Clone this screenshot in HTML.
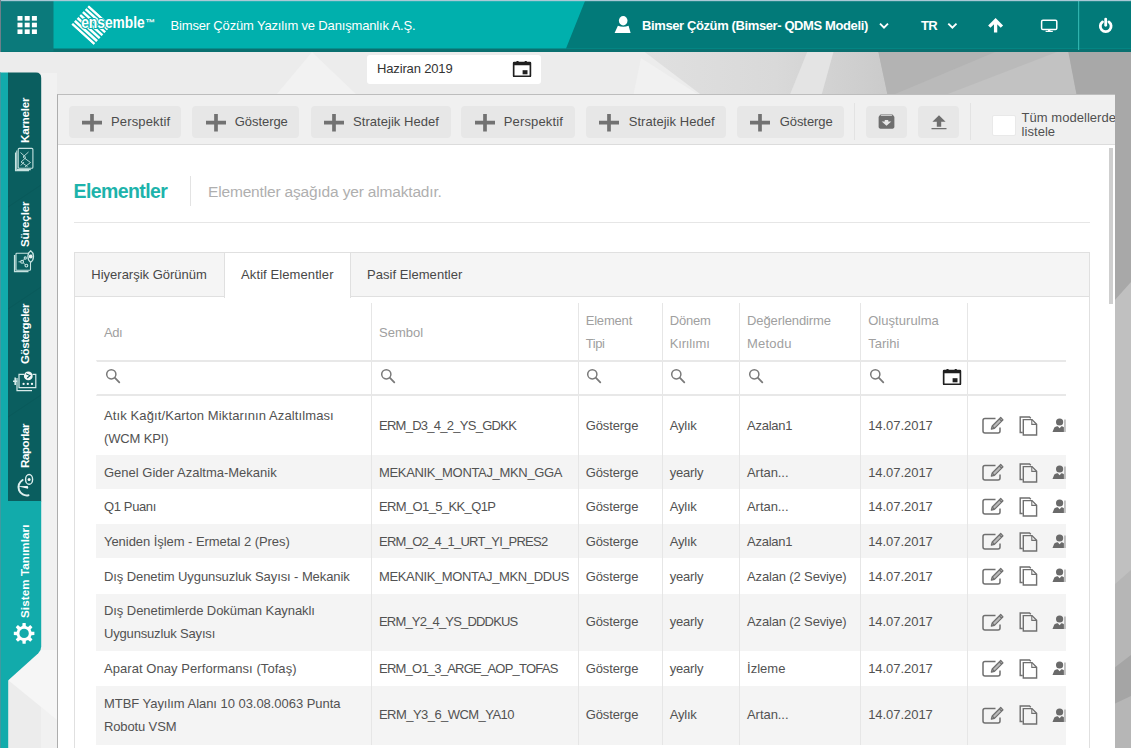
<!DOCTYPE html>
<html lang="tr">
<head>
<meta charset="utf-8">
<title>Ensemble - Elementler</title>
<style>
*{box-sizing:border-box;margin:0;padding:0}
html,body{width:1131px;height:748px;overflow:hidden}
body{font-family:"Liberation Sans",sans-serif;font-size:13px;color:#444;background:#e9e9e9;position:relative}
.abs{position:absolute}
#bg{left:0;top:0;width:1131px;height:748px}
/* header */
#hdr{left:0;top:0;width:1131px;height:52px}
#hdr .t{position:absolute;color:#fff;white-space:nowrap}
/* sidebar */
.vt{position:absolute;color:#fff;font-weight:bold;font-size:11.6px;white-space:nowrap;transform-origin:0 0;transform:rotate(-90deg)}
/* panel */
#panel{overflow:hidden;left:57px;top:94px;width:1058px;height:660px;background:#fff;border-left:1px solid #adadad;border-top:1px solid #bdbdbd}
#tb{left:0;top:0;width:1057px;height:50.2px;background:#f0f0f0;border-bottom:1px solid #dcdcdc}
.btn{position:absolute;top:10.7px;height:32.5px;background:#e7e7e7;border-radius:4px;color:#4c4c4c;font-size:13px;line-height:32.5px;white-space:nowrap}
.btn svg{position:absolute;left:13.3px;top:8.3px}
.btn span{position:absolute;left:42.5px;top:0}
.sep{position:absolute;top:8px;width:1px;height:37px;background:#e3e3e3}
/* table */
table{border-collapse:separate;border-spacing:0;table-layout:fixed;position:absolute;left:21px;top:50px;width:970px}
td,th{font-size:13px;font-weight:normal;text-align:left;padding:0 0 0 7px;line-height:23px;vertical-align:middle;border-left:1px solid #e6e6e6;color:#525252;white-space:nowrap;overflow:hidden}
td:first-child,th:first-child{border-left:1px solid transparent}
th{color:#a0a0a0;line-height:22.8px}
tr.h th{height:57px;padding-top:4px}
tr.f th{height:36.5px;border-top:2px solid #e8e8e8;border-bottom:2px solid #e8e8e8;position:relative}
tr.f th svg{position:absolute;left:7.6px;top:6.7px}
tr.s td{padding-top:0.3px}
tr.d td{padding-bottom:1px}
tr.p td:first-child{padding-top:2.5px;padding-bottom:0}
tr.g td{background:#f4f4f4}
td.w{white-space:normal}
td.ic{padding:0;position:relative}
td.ic svg{position:absolute;top:50%}

#b0{letter-spacing:0.14px}
#b1{letter-spacing:-0.06px}
#b2{letter-spacing:0.05px}
#b3{letter-spacing:0.14px}
#b4{letter-spacing:0.05px}
#b5{letter-spacing:-0.06px}
#cb1{letter-spacing:0.04px}
#cb2{letter-spacing:0.06px}
#ttl{letter-spacing:-0.59px}
#sub{letter-spacing:-0.17px}
#t1{letter-spacing:0.09px}
#t2{letter-spacing:0.04px}
#th0_0{letter-spacing:-0.41px}
#th2_0{letter-spacing:-0.19px}
#th2_1{letter-spacing:-0.44px}
#th3_0{letter-spacing:-0.18px}
#th3_1{letter-spacing:-0.15px}
#th4_0{letter-spacing:-0.10px}
#th4_1{letter-spacing:0.22px}
#th5_0{letter-spacing:0.05px}
#th5_1{letter-spacing:0.04px}
#r0a0{letter-spacing:0.11px}
#r0a1{letter-spacing:-0.15px}
#r0b{letter-spacing:-0.73px}
#r0c{letter-spacing:-0.10px}
#r0d{letter-spacing:-0.21px}
#r0e{letter-spacing:-0.23px}
#r0f{letter-spacing:-0.05px}
#r1b{letter-spacing:-0.33px}
#r1c{letter-spacing:-0.10px}
#r1d{letter-spacing:-0.18px}
#r1e{letter-spacing:-0.05px}
#r1f{letter-spacing:-0.05px}
#r2a0{letter-spacing:-0.37px}
#r2b{letter-spacing:-0.63px}
#r2c{letter-spacing:-0.10px}
#r2d{letter-spacing:-0.21px}
#r2e{letter-spacing:-0.05px}
#r2f{letter-spacing:-0.05px}
#r3a0{letter-spacing:-0.05px}
#r3b{letter-spacing:-0.74px}
#r3c{letter-spacing:-0.10px}
#r3d{letter-spacing:-0.21px}
#r3e{letter-spacing:-0.23px}
#r3f{letter-spacing:-0.05px}
#r4a0{letter-spacing:-0.09px}
#r4b{letter-spacing:-0.36px}
#r4c{letter-spacing:-0.10px}
#r4d{letter-spacing:-0.18px}
#r4e{letter-spacing:-0.14px}
#r4f{letter-spacing:-0.05px}
#r5a0{letter-spacing:-0.07px}
#r5a1{letter-spacing:-0.17px}
#r5b{letter-spacing:-0.82px}
#r5c{letter-spacing:-0.10px}
#r5d{letter-spacing:-0.18px}
#r5e{letter-spacing:-0.14px}
#r5f{letter-spacing:-0.05px}
#r6a0{letter-spacing:0.06px}
#r6b{letter-spacing:-0.77px}
#r6c{letter-spacing:-0.10px}
#r6d{letter-spacing:-0.18px}
#r6e{letter-spacing:0.03px}
#r6f{letter-spacing:-0.05px}
#r7a0{letter-spacing:-0.04px}
#r7a1{letter-spacing:-0.13px}
#r7b{letter-spacing:-0.55px}
#r7c{letter-spacing:-0.10px}
#r7d{letter-spacing:-0.21px}
#r7e{letter-spacing:-0.05px}
#r7f{letter-spacing:-0.05px}
#h1{letter-spacing:-0.17px}
#h2{letter-spacing:-0.39px}
#h3{letter-spacing:-0.57px}
#dt{letter-spacing:-0.15px}
#v1{letter-spacing:-0.21px}
#v2{letter-spacing:-0.11px}
#v3{letter-spacing:-0.46px}
#v4{letter-spacing:-0.46px}
#v5{letter-spacing:0.10px}
</style>
</head>
<body>
<svg id="bg" class="abs" width="1131" height="748" viewBox="0 0 1131 748">
<defs>
<linearGradient id="ga" gradientUnits="userSpaceOnUse" x1="642" x2="885" y1="0" y2="0">
<stop offset="0" stop-color="#e0e0e0"/><stop offset="0.55" stop-color="#d9d9d9"/><stop offset="1" stop-color="#cbcbcb"/>
</linearGradient>
</defs>
<rect x="0" y="0" width="1131" height="748" fill="#ececec"/>
<polygon points="642,50 1131,50 1131,97 704,97" fill="url(#ga)"/>
<polygon points="641,58 702,97 633,97" fill="#f1f1f1"/>
<polygon points="789,97 808,50 834,50 821,97" fill="#e4e4e4"/>
<polygon points="878,50 1131,50 1131,97 888,97" fill="#bababa"/>
<polygon points="878,50 1000,50 888,97" fill="#b3b3b3"/>
<polygon points="940,97 1062,50 1068,50 1077,97" fill="#c2c2c2"/>
<polygon points="1068,50 1131,50 1131,97 1077,97" fill="#a8a8a8"/>
<rect x="1114" y="50" width="17" height="698" fill="#a8a8a8"/>
<polygon points="1114,301 1131,282 1131,748 1114,748" fill="#c0c0c0"/>
<polygon points="1114,585 1131,570 1131,748 1114,748" fill="#b6b6b6"/>
<polygon points="1114,668 1131,655 1131,696 1114,704" fill="#a5a5a5"/>
<polygon points="276,95 312,52 357,95" fill="#f2f2f2"/>
<polygon points="41,73 57,73 57,748 41,748" fill="#f1f1f1"/>
<polygon points="8,680 41,650 57,650 57,720" fill="#f6f6f6"/>
</svg>

<!-- HEADER -->
<div id="hdr" class="abs">
<svg class="abs" style="left:0;top:0" width="1131" height="52" viewBox="0 0 1131 52">
<rect x="0" y="0" width="1131" height="52" fill="#0a7070"/>
<rect x="0" y="1" width="1131" height="47.5" fill="#00b0ad"/>
<polygon points="585,1 1131,1 1131,48.5 566,48.5" fill="#027a79"/>
<rect x="0" y="1" width="53.5" height="50.5" fill="#0b7a7b"/>
<rect x="1078" y="1" width="1.200" height="49" fill="#2fb3ae"/>
<rect x="0" y="0" width="1131" height="1.2" fill="#a9c9d6"/>
<rect x="0" y="0" width="1" height="52" fill="#6d7f8a"/>
<!-- grid icon -->
<g fill="#fff">
<rect x="17.5" y="16" width="5" height="4.6"/><rect x="24.7" y="16" width="5" height="4.6"/><rect x="31.9" y="16" width="5" height="4.6"/>
<rect x="17.5" y="22.7" width="5" height="4.6"/><rect x="24.7" y="22.7" width="5" height="4.6"/><rect x="31.9" y="22.7" width="5" height="4.6"/>
<rect x="17.5" y="29.4" width="5" height="4.6"/><rect x="24.7" y="29.4" width="5" height="4.6"/><rect x="31.9" y="29.4" width="5" height="4.6"/>
</g>
</svg>

<!-- logo -->
<svg class="abs" style="left:60px;top:0" width="110" height="52" viewBox="60 0 110 52">
<defs><clipPath id="dm"><rect x="-15" y="-13.200" width="30" height="26.400"/></clipPath></defs>
<g transform="translate(91.300,25.100) rotate(42.300)" clip-path="url(#dm)" fill="#fff">
<rect x="-16" y="-13.20" width="32" height="2.500"/>
<rect x="-16" y="-9.22" width="32" height="2.500"/>
<rect x="-16" y="-5.24" width="32" height="2.500"/>
<rect x="-16" y="-1.26" width="32" height="2.500"/>
<rect x="-16" y="2.72" width="32" height="2.500"/>
<rect x="-16" y="6.70" width="32" height="2.500"/>
<rect x="-16" y="10.68" width="32" height="2.500"/>
</g>
<text id="logotx" x="81.200" y="27.700" font-family="Liberation Sans, sans-serif" font-weight="bold" font-size="16.500" fill="#fff" stroke="#00b0ad" stroke-width="1.900" paint-order="stroke" textLength="63.500" lengthAdjust="spacingAndGlyphs">ensemble</text>
<text x="145.300" y="26.300" font-family="Liberation Sans, sans-serif" font-weight="bold" font-size="9.500" fill="#fff">™</text>
</svg>
<div class="t" id="h1" style="left:170.5px;top:17.5px;font-size:13px;line-height:16px">Bimser Çözüm Yazılım ve Danışmanlık A.Ş.</div>
<div class="t" id="h2" style="left:642px;top:17.5px;font-size:13px;line-height:16px;font-weight:bold">Bimser Çözüm (Bimser- QDMS Modeli)</div>
<div class="t" id="h3" style="left:921px;top:17.5px;font-size:13px;line-height:16px;font-weight:bold">TR</div>
<svg class="abs" style="left:0;top:0" width="1131" height="52" viewBox="0 0 1131 52" fill="none" stroke="#fff">
<!-- user -->
<g fill="#fff" stroke="none"><ellipse cx="623.200" cy="20.700" rx="4.300" ry="4.700"/><path d="M614.600 33.100 L617.900 25.800 Q623.200 27.800 628.600 25.800 L630.600 33.100 Z"/></g>
<!-- chevrons -->
<path d="M880 23.6 L884 27.6 L888 23.6" stroke-width="1.9"/>
<path d="M948.3 23.6 L952.4 27.6 L956.5 23.6" stroke-width="1.9"/>
<!-- up arrow -->
<path d="M995.600 32.500 V21.500 M989.300 26.700 L995.600 20.400 L1001.900 26.700" stroke-width="3.300" stroke-linejoin="miter"/>
<!-- monitor -->
<rect x="1041.6" y="20.2" width="15.2" height="9.4" rx="1.4" stroke-width="1.5"/>
<path d="M1045.6 31.4 H1052.8" stroke-width="1.2"/><path d="M1049.2 29.6 V31.4" stroke-width="2.4"/>
<!-- power -->
<path d="M1102.500 21.900 A5.400 5.400 0 1 0 1108.900 21.900" stroke-width="2.800" stroke-linecap="round"/>
<path d="M1105.700 19.100 V25.300" stroke-width="2.800" stroke-linecap="round"/>
</svg>
</div>
<div id="datebox" class="abs" style="left:366.5px;top:55px;width:174px;height:28.5px;background:#fff;border-radius:3px">
<span id="dt" style="position:absolute;left:10.5px;top:6px;font-size:13px;line-height:16px;color:#333;white-space:nowrap">Haziran 2019</span>
<svg style="position:absolute;left:145px;top:5.100px" width="20.800" height="18" viewBox="0 0 20 18" preserveAspectRatio="none"><path fill="#1f1f1f" fill-rule="evenodd" d="M2 1.800 H4.300 V0.900 H6.300 V1.800 H12.200 V0.900 H14.200 V1.800 H17.300 Q18.500 1.800 18.500 3 V15.900 Q18.500 17.100 17.300 17.100 H2 Q0.800 17.100 0.800 15.900 V3 Q0.800 1.800 2 1.800 Z M2.400 5.200 V15.500 H16.900 V5.200 Z"/><rect x="10.200" y="10.200" width="4.700" height="4.100" fill="#1f1f1f"/></svg>
</div>

<div id="side" class="abs" style="left:0;top:0;width:60px;height:748px">
<svg class="abs" style="left:0;top:0" width="60" height="748" viewBox="0 0 60 748">
<rect x="0" y="72.5" width="8.2" height="676" fill="#12abab"/>
<rect x="0" y="72.5" width="1" height="676" fill="#3f9aa0"/>
<path d="M8 72.5 H36 Q41.2 72.5 41.2 78 V501.5 H8 Z" fill="#0a5e5f"/>
<path d="M8 501 H41.200 V646.500 Q41.200 650.500 38.300 653.200 L8 680.500 Z" fill="#12abab"/>
<g stroke="#084f50" stroke-width="1" opacity="0.3">
<path d="M8 207 L41 185"/><path d="M8 309 L41 287"/><path d="M8 417 L41 395"/>
</g>
<!-- ICONS_SIDE -->
<!-- karneler icon -->
<g fill="none" stroke="#d6eeec" stroke-width="1.100" opacity="0.92">
<rect x="18.200" y="148.400" width="14.700" height="19.800" rx="1"/>
<path d="M16.800 150.600 V169.600 H30.800 M15.500 152.400 V170.800 H29"/>
<path d="M20.500 152.500 L26 157.500 L21 162 L27.500 166.500 M28.500 152 L23 157 L30.500 162.500 L25 166.800 M20.800 165.500 L24 162" stroke-width="0.900"/>
</g>
<!-- surecler icon -->
<g fill="none" stroke="#d6eeec" stroke-width="1.100" opacity="0.92">
<rect x="16" y="253.300" width="14.500" height="17" rx="0.800"/>
<path d="M14.600 255 V271.600 H28.500" stroke-width="1.400"/>
<circle cx="22.100" cy="261.800" r="1.400"/><circle cx="26.400" cy="265.600" r="1.400"/><circle cx="25.300" cy="258" r="1.100"/>
<path d="M23.200 262.800 L25.300 264.600 M18.500 261.800 H20.700 M23 260.700 L24.500 258.900" stroke-width="0.900"/>
<path d="M30.700 250.800 C34.400 253.200 34.400 259.800 30.700 262.200 C27 259.800 27 253.200 30.700 250.800 Z" fill="#0a5e5f" stroke-width="1.300"/>
<circle cx="30.700" cy="256.500" r="1.900" fill="#fff" stroke="none"/>
</g>
<!-- gostergeler icon -->
<g fill="none" stroke="#e2f3f2" stroke-width="1.200" opacity="0.95">
<path d="M24 374.400 H19 V387.700 H35.800 V374.400 H32.600"/>
<path d="M17 378 V390.600 H32"/>
<path d="M15.200 377.500 V385 M13 381.200 H17.200" stroke-width="1.600"/>
<circle cx="28.300" cy="375.900" r="4.400" fill="#fff" stroke="none"/>
<path d="M26 373.800 L30 375.600 L27.200 378" stroke="#0a5e5f" stroke-width="1.100"/>
<g fill="#fff" stroke="none"><circle cx="23.600" cy="383.900" r="1.150"/><circle cx="27.800" cy="383.900" r="1.150"/><circle cx="32" cy="383.900" r="1.150"/></g>
</g>
<!-- raporlar icon -->
<g fill="none" stroke="#e6f5f4" opacity="0.96">
<path d="M22.600 480 A8.300 8.300 0 0 0 28.500 495.300" stroke-width="2" stroke-linecap="round"/>
<path d="M17.600 486.200 L27.600 486 Q28.800 487.200 28 488.700 Z" fill="#fff" stroke="none"/>
<ellipse cx="29.100" cy="479.400" rx="3.500" ry="4.900" stroke-width="1.400"/>
<circle cx="29.100" cy="479.400" r="1.500" fill="#fff" stroke="none"/>
</g>
<!-- gear -->
<path d="M31.49 631.63 L34.38 631.85 L34.38 634.95 L31.49 635.17 L30.58 637.37 L32.47 639.58 L30.28 641.77 L28.07 639.88 L25.87 640.79 L25.65 643.68 L22.55 643.68 L22.33 640.79 L20.13 639.88 L17.92 641.77 L15.73 639.58 L17.62 637.37 L16.71 635.17 L13.82 634.95 L13.82 631.85 L16.71 631.63 L17.62 629.43 L15.73 627.22 L17.92 625.03 L20.13 626.92 L22.33 626.01 L22.55 623.12 L25.65 623.12 L25.87 626.01 L28.07 626.92 L30.28 625.03 L32.47 627.22 L30.58 629.43 Z M28.80 633.40 A4.7 4.7 0 1 0 19.40 633.40 A4.7 4.7 0 1 0 28.80 633.40 Z" fill="#fff" fill-rule="evenodd"/>

</svg>
<div class="vt" id="v1" style="left:17.5px;top:142.5px">Karneler</div>
<div class="vt" id="v2" style="left:17.5px;top:247px">Süreçler</div>
<div class="vt" id="v3" style="left:17.5px;top:364px">Göstergeler</div>
<div class="vt" id="v4" style="left:17.5px;top:467.5px">Raporlar</div>
<div class="vt" id="v5" style="left:17.5px;top:617.5px">Sistem Tanımları</div>
</div>

<div id="panel" class="abs">
<div id="tb" class="abs">
<div class="btn" style="left:10.5px;width:112px"><svg width="20" height="18" viewBox="0 0 20 18"><path d="M10 0 V17.400 M0 8.700 H20" stroke="#727272" stroke-width="3.700" fill="none"/></svg><span id="b0">Perspektif</span></div>
<div class="btn" style="left:134.3px;width:107px"><svg width="20" height="18" viewBox="0 0 20 18"><path d="M10 0 V17.400 M0 8.700 H20" stroke="#727272" stroke-width="3.700" fill="none"/></svg><span id="b1">Gösterge</span></div>
<div class="btn" style="left:252.5px;width:140px"><svg width="20" height="18" viewBox="0 0 20 18"><path d="M10 0 V17.400 M0 8.700 H20" stroke="#727272" stroke-width="3.700" fill="none"/></svg><span id="b2">Stratejik Hedef</span></div>
<div class="btn" style="left:403.3px;width:113.3px"><svg width="20" height="18" viewBox="0 0 20 18"><path d="M10 0 V17.400 M0 8.700 H20" stroke="#727272" stroke-width="3.700" fill="none"/></svg><span id="b3">Perspektif</span></div>
<div class="btn" style="left:528.2px;width:140.3px"><svg width="20" height="18" viewBox="0 0 20 18"><path d="M10 0 V17.400 M0 8.700 H20" stroke="#727272" stroke-width="3.700" fill="none"/></svg><span id="b4">Stratejik Hedef</span></div>
<div class="btn" style="left:679.2px;width:107px"><svg width="20" height="18" viewBox="0 0 20 18"><path d="M10 0 V17.400 M0 8.700 H20" stroke="#727272" stroke-width="3.700" fill="none"/></svg><span id="b5">Gösterge</span></div>
<div class="sep" style="left:796.3px"></div>
<div class="btn" style="left:807.5px;width:41px"><svg style="left:10.100px;top:6.600px" width="21" height="19" viewBox="0 0 24 24" preserveAspectRatio="none"><path fill="#6e6e6e" d="M20.540 5.230l-1.390-1.680C18.880 3.210 18.470 3 18 3H6c-.47 0-.88.21-1.160.55L3.460 5.230C3.170 5.570 3 6.020 3 6.500V19c0 1.100.9 2 2 2h14c1.100 0 2-.9 2-2V6.500c0-.48-.17-.93-.46-1.270zM12 17.500L6.500 12H10v-2h4v2h3.500L12 17.500zM5.120 5l.81-1h12l.94 1H5.120z"/></svg></div>
<div class="btn" style="left:860px;width:41px"><svg style="left:12.500px;top:9px" width="16" height="15" viewBox="0 0 16 15"><path fill="#6e6e6e" d="M8 0.300 L14.600 6.700 H10.200 V11.800 H5.800 V6.700 H1.400 Z M0.500 12.900 H15.500 V14.300 H0.500 Z"/></svg></div>
<div class="sep" style="left:912px"></div>
<div class="abs" style="left:934.4px;top:20px;width:23.400px;height:21.200px;background:#fff;border:1px solid #e9e9e9;border-radius:2px"></div>
<div class="abs" id="cbt" style="left:963.5px;top:16px;font-size:13px;line-height:14.200px;color:#505050;white-space:nowrap"><span id="cb1">Tüm modellerde</span><br><span id="cb2">listele</span></div>
</div>
<div class="abs" style="left:1050.8px;top:52.5px;width:4.200px;height:156px;background:#cfcfcf"></div>
<div class="abs" style="left:15.5px;top:84px;font-size:19.500px;line-height:24px;font-weight:bold;color:#1db3ab;white-space:nowrap"><span id="ttl">Elementler</span></div>
<div class="abs" style="left:132px;top:80.5px;width:1px;height:30px;background:#e3e3e3"></div>
<div class="abs" style="left:150px;top:87px;font-size:15.500px;line-height:20px;color:#afafaf;white-space:nowrap"><span id="sub">Elementler aşağıda yer almaktadır.</span></div>
<div class="abs" style="left:16px;top:126.5px;width:1015.500px;height:1px;background:#e6e6e6"></div>
<div class="abs" id="tabs" style="left:16px;top:156.5px;width:1015.500px;height:520px;border:1px solid #e0e0e0;background:#fff">
<div class="abs" style="left:0;top:0;width:1013.500px;height:44.500px;background:#f5f5f5;border-bottom:1px solid #e0e0e0"></div>
<div class="abs" style="left:148.5px;top:0;width:127.500px;height:45px;background:#fff;border-left:1px solid #e0e0e0;border-right:1px solid #e0e0e0"></div>
<div class="abs" style="left:16.3px;top:14.0px;font-size:13px;line-height:16px;color:#484848;white-space:nowrap"><span id="t0">Hiyerarşik Görünüm</span></div>
<div class="abs" style="left:166.1px;top:14.0px;font-size:13px;line-height:16px;color:#484848;white-space:nowrap"><span id="t1">Aktif Elementler</span></div>
<div class="abs" style="left:292.1px;top:14.0px;font-size:13px;line-height:16px;color:#484848;white-space:nowrap"><span id="t2">Pasif Elementler</span></div>
<table>
<colgroup><col style="width:275px"><col style="width:206.700px"><col style="width:84px"><col style="width:77.300px"><col style="width:121.200px"><col style="width:106.600px"><col style="width:99.200px"></colgroup>
<tr class="h"><th><span id="th0_0">Adı</span></th><th><span id="th1_0">Sembol</span></th><th><span id="th2_0">Element</span><br><span id="th2_1">Tipi</span></th><th><span id="th3_0">Dönem</span><br><span id="th3_1">Kırılımı</span></th><th><span id="th4_0">Değerlendirme</span><br><span id="th4_1">Metodu</span></th><th><span id="th5_0">Oluşturulma</span><br><span id="th5_1">Tarihi</span></th><th></th></tr>
<tr class="f"><th><svg width="16" height="16" viewBox="0 0 16 16"><circle cx="6.300" cy="6.300" r="4.600" fill="none" stroke="#7a7a7a" stroke-width="1.500"/><path d="M9.700 9.700 L14.300 14.300" stroke="#7a7a7a" stroke-width="1.800" stroke-linecap="round"/></svg></th><th><svg width="16" height="16" viewBox="0 0 16 16"><circle cx="6.300" cy="6.300" r="4.600" fill="none" stroke="#7a7a7a" stroke-width="1.500"/><path d="M9.700 9.700 L14.300 14.300" stroke="#7a7a7a" stroke-width="1.800" stroke-linecap="round"/></svg></th><th><svg width="16" height="16" viewBox="0 0 16 16"><circle cx="6.300" cy="6.300" r="4.600" fill="none" stroke="#7a7a7a" stroke-width="1.500"/><path d="M9.700 9.700 L14.300 14.300" stroke="#7a7a7a" stroke-width="1.800" stroke-linecap="round"/></svg></th><th><svg width="16" height="16" viewBox="0 0 16 16"><circle cx="6.300" cy="6.300" r="4.600" fill="none" stroke="#7a7a7a" stroke-width="1.500"/><path d="M9.700 9.700 L14.300 14.300" stroke="#7a7a7a" stroke-width="1.800" stroke-linecap="round"/></svg></th><th><svg width="16" height="16" viewBox="0 0 16 16"><circle cx="6.300" cy="6.300" r="4.600" fill="none" stroke="#7a7a7a" stroke-width="1.500"/><path d="M9.700 9.700 L14.300 14.300" stroke="#7a7a7a" stroke-width="1.800" stroke-linecap="round"/></svg></th><th><svg width="16" height="16" viewBox="0 0 16 16"><circle cx="6.300" cy="6.300" r="4.600" fill="none" stroke="#7a7a7a" stroke-width="1.500"/><path d="M9.700 9.700 L14.300 14.300" stroke="#7a7a7a" stroke-width="1.800" stroke-linecap="round"/></svg><svg style="left:81px;top:6.100px" width="20.800" height="18" viewBox="0 0 20 18" preserveAspectRatio="none"><path fill="#1f1f1f" fill-rule="evenodd" d="M2 1.800 H4.300 V0.900 H6.300 V1.800 H12.200 V0.900 H14.200 V1.800 H17.300 Q18.500 1.800 18.500 3 V15.900 Q18.500 17.100 17.300 17.100 H2 Q0.800 17.100 0.800 15.900 V3 Q0.800 1.800 2 1.800 Z M2.400 5.200 V15.500 H16.900 V5.200 Z"/><rect x="10.200" y="10.200" width="4.700" height="4.100" fill="#1f1f1f"/></svg></th><th></th></tr>
<tr class="d p" style="height:59.4px"><td><span id="r0a0">Atık Kağıt/Karton Miktarının Azaltılması</span><br><span id="r0a1">(WCM KPI)</span></td><td><span id="r0b">ERM_D3_4_2_YS_GDKK</span></td><td><span id="r0c">Gösterge</span></td><td><span id="r0d">Aylık</span></td><td><span id="r0e">Azalan1</span></td><td><span id="r0f">14.07.2017</span></td><td class="ic"><svg style="left:14.500px;margin-top:-9.300px" width="24" height="18" viewBox="0 0 24 18" fill="none" stroke="#6f6f6f"><path d="M13.500 2.600 H3 Q1 2.600 1 4.600 V15 Q1 17 3 17 H16 Q18 17 18 15 V11.500" stroke-width="1.500"/><path d="M9.300 13.200 L10.200 10 L18.700 1.500 L21 3.800 L12.500 12.300 Z M10.200 10 L12.500 12.300 M17.300 2.900 L19.600 5.200" stroke-width="1.200" stroke-linejoin="round" fill="#b9b9b9"/></svg><svg style="left:51.200px;margin-top:-9.700px" width="19" height="20" viewBox="0 0 19 20" fill="none" stroke="#6f6f6f" stroke-width="1.400"><path d="M3.700 16.500 H1.200 V1 H10.500 L11.800 2.300"/><path d="M4.300 3.600 H13 L17.600 8.200 V19 H4.300 Z"/><path d="M12.800 3.800 V8.400 H17.400" stroke-width="1.100"/></svg><svg style="left:84.200px;margin-top:-7.600px" width="15" height="15" viewBox="0 0 15 15"><g fill="#6a6a6a"><circle cx="7.600" cy="4" r="3.600"/><path d="M0.500 14 L2.300 9.600 Q4 8.300 5.800 8.300 L7.600 10.200 L9.400 8.300 Q10.800 8.300 11.900 9.200 V14 Z"/><rect x="12.300" y="1.500" width="1.300" height="12.500" fill="#a5a5a5"/></g></svg></td></tr>
<tr class="s g" style="height:33.9px"><td><span id="r1a0">Genel Gider Azaltma-Mekanik</span></td><td><span id="r1b">MEKANIK_MONTAJ_MKN_GGA</span></td><td><span id="r1c">Gösterge</span></td><td><span id="r1d">yearly</span></td><td><span id="r1e">Artan...</span></td><td><span id="r1f">14.07.2017</span></td><td class="ic"><svg style="left:14.500px;margin-top:-9.300px" width="24" height="18" viewBox="0 0 24 18" fill="none" stroke="#6f6f6f"><path d="M13.500 2.600 H3 Q1 2.600 1 4.600 V15 Q1 17 3 17 H16 Q18 17 18 15 V11.500" stroke-width="1.500"/><path d="M9.300 13.200 L10.200 10 L18.700 1.500 L21 3.800 L12.500 12.300 Z M10.200 10 L12.500 12.300 M17.300 2.900 L19.600 5.200" stroke-width="1.200" stroke-linejoin="round" fill="#b9b9b9"/></svg><svg style="left:51.200px;margin-top:-9.700px" width="19" height="20" viewBox="0 0 19 20" fill="none" stroke="#6f6f6f" stroke-width="1.400"><path d="M3.700 16.500 H1.200 V1 H10.500 L11.800 2.300"/><path d="M4.300 3.600 H13 L17.600 8.200 V19 H4.300 Z"/><path d="M12.800 3.800 V8.400 H17.400" stroke-width="1.100"/></svg><svg style="left:84.200px;margin-top:-7.600px" width="15" height="15" viewBox="0 0 15 15"><g fill="#6a6a6a"><circle cx="7.600" cy="4" r="3.600"/><path d="M0.500 14 L2.300 9.600 Q4 8.300 5.800 8.300 L7.600 10.200 L9.400 8.300 Q10.800 8.300 11.900 9.200 V14 Z"/><rect x="12.300" y="1.500" width="1.300" height="12.500" fill="#a5a5a5"/></g></svg></td></tr>
<tr class="s" style="height:35px"><td><span id="r2a0">Q1 Puanı</span></td><td><span id="r2b">ERM_O1_5_KK_Q1P</span></td><td><span id="r2c">Gösterge</span></td><td><span id="r2d">Aylık</span></td><td><span id="r2e">Artan...</span></td><td><span id="r2f">14.07.2017</span></td><td class="ic"><svg style="left:14.500px;margin-top:-9.300px" width="24" height="18" viewBox="0 0 24 18" fill="none" stroke="#6f6f6f"><path d="M13.500 2.600 H3 Q1 2.600 1 4.600 V15 Q1 17 3 17 H16 Q18 17 18 15 V11.500" stroke-width="1.500"/><path d="M9.300 13.200 L10.200 10 L18.700 1.500 L21 3.800 L12.500 12.300 Z M10.200 10 L12.500 12.300 M17.300 2.900 L19.600 5.200" stroke-width="1.200" stroke-linejoin="round" fill="#b9b9b9"/></svg><svg style="left:51.200px;margin-top:-9.700px" width="19" height="20" viewBox="0 0 19 20" fill="none" stroke="#6f6f6f" stroke-width="1.400"><path d="M3.700 16.500 H1.200 V1 H10.500 L11.800 2.300"/><path d="M4.300 3.600 H13 L17.600 8.200 V19 H4.300 Z"/><path d="M12.800 3.800 V8.400 H17.400" stroke-width="1.100"/></svg><svg style="left:84.200px;margin-top:-7.600px" width="15" height="15" viewBox="0 0 15 15"><g fill="#6a6a6a"><circle cx="7.600" cy="4" r="3.600"/><path d="M0.500 14 L2.300 9.600 Q4 8.300 5.800 8.300 L7.600 10.200 L9.400 8.300 Q10.800 8.300 11.900 9.200 V14 Z"/><rect x="12.300" y="1.500" width="1.300" height="12.500" fill="#a5a5a5"/></g></svg></td></tr>
<tr class="s g" style="height:34px"><td><span id="r3a0">Yeniden İşlem - Ermetal 2 (Pres)</span></td><td><span id="r3b">ERM_O2_4_1_URT_YI_PRES2</span></td><td><span id="r3c">Gösterge</span></td><td><span id="r3d">Aylık</span></td><td><span id="r3e">Azalan1</span></td><td><span id="r3f">14.07.2017</span></td><td class="ic"><svg style="left:14.500px;margin-top:-9.300px" width="24" height="18" viewBox="0 0 24 18" fill="none" stroke="#6f6f6f"><path d="M13.500 2.600 H3 Q1 2.600 1 4.600 V15 Q1 17 3 17 H16 Q18 17 18 15 V11.500" stroke-width="1.500"/><path d="M9.300 13.200 L10.200 10 L18.700 1.500 L21 3.800 L12.500 12.300 Z M10.200 10 L12.500 12.300 M17.300 2.900 L19.600 5.200" stroke-width="1.200" stroke-linejoin="round" fill="#b9b9b9"/></svg><svg style="left:51.200px;margin-top:-9.700px" width="19" height="20" viewBox="0 0 19 20" fill="none" stroke="#6f6f6f" stroke-width="1.400"><path d="M3.700 16.500 H1.200 V1 H10.500 L11.800 2.300"/><path d="M4.300 3.600 H13 L17.600 8.200 V19 H4.300 Z"/><path d="M12.800 3.800 V8.400 H17.400" stroke-width="1.100"/></svg><svg style="left:84.200px;margin-top:-7.600px" width="15" height="15" viewBox="0 0 15 15"><g fill="#6a6a6a"><circle cx="7.600" cy="4" r="3.600"/><path d="M0.500 14 L2.300 9.600 Q4 8.300 5.800 8.300 L7.600 10.200 L9.400 8.300 Q10.800 8.300 11.900 9.200 V14 Z"/><rect x="12.300" y="1.500" width="1.300" height="12.500" fill="#a5a5a5"/></g></svg></td></tr>
<tr class="s" style="height:35.3px"><td><span id="r4a0">Dış Denetim Uygunsuzluk Sayısı - Mekanik</span></td><td><span id="r4b">MEKANIK_MONTAJ_MKN_DDUS</span></td><td><span id="r4c">Gösterge</span></td><td><span id="r4d">yearly</span></td><td><span id="r4e">Azalan (2 Seviye)</span></td><td><span id="r4f">14.07.2017</span></td><td class="ic"><svg style="left:14.500px;margin-top:-9.300px" width="24" height="18" viewBox="0 0 24 18" fill="none" stroke="#6f6f6f"><path d="M13.500 2.600 H3 Q1 2.600 1 4.600 V15 Q1 17 3 17 H16 Q18 17 18 15 V11.500" stroke-width="1.500"/><path d="M9.300 13.200 L10.200 10 L18.700 1.500 L21 3.800 L12.500 12.300 Z M10.200 10 L12.500 12.300 M17.300 2.900 L19.600 5.200" stroke-width="1.200" stroke-linejoin="round" fill="#b9b9b9"/></svg><svg style="left:51.200px;margin-top:-9.700px" width="19" height="20" viewBox="0 0 19 20" fill="none" stroke="#6f6f6f" stroke-width="1.400"><path d="M3.700 16.500 H1.200 V1 H10.500 L11.800 2.300"/><path d="M4.300 3.600 H13 L17.600 8.200 V19 H4.300 Z"/><path d="M12.800 3.800 V8.400 H17.400" stroke-width="1.100"/></svg><svg style="left:84.200px;margin-top:-7.600px" width="15" height="15" viewBox="0 0 15 15"><g fill="#6a6a6a"><circle cx="7.600" cy="4" r="3.600"/><path d="M0.500 14 L2.300 9.600 Q4 8.300 5.800 8.300 L7.600 10.200 L9.400 8.300 Q10.800 8.300 11.900 9.200 V14 Z"/><rect x="12.300" y="1.500" width="1.300" height="12.500" fill="#a5a5a5"/></g></svg></td></tr>
<tr class="d g" style="height:57.2px"><td><span id="r5a0">Dış Denetimlerde Doküman Kaynaklı</span><br><span id="r5a1">Uygunsuzluk Sayısı</span></td><td><span id="r5b">ERM_Y2_4_YS_DDDKUS</span></td><td><span id="r5c">Gösterge</span></td><td><span id="r5d">yearly</span></td><td><span id="r5e">Azalan (2 Seviye)</span></td><td><span id="r5f">14.07.2017</span></td><td class="ic"><svg style="left:14.500px;margin-top:-9.300px" width="24" height="18" viewBox="0 0 24 18" fill="none" stroke="#6f6f6f"><path d="M13.500 2.600 H3 Q1 2.600 1 4.600 V15 Q1 17 3 17 H16 Q18 17 18 15 V11.500" stroke-width="1.500"/><path d="M9.300 13.200 L10.200 10 L18.700 1.500 L21 3.800 L12.500 12.300 Z M10.200 10 L12.500 12.300 M17.300 2.900 L19.600 5.200" stroke-width="1.200" stroke-linejoin="round" fill="#b9b9b9"/></svg><svg style="left:51.200px;margin-top:-9.700px" width="19" height="20" viewBox="0 0 19 20" fill="none" stroke="#6f6f6f" stroke-width="1.400"><path d="M3.700 16.500 H1.200 V1 H10.500 L11.800 2.300"/><path d="M4.300 3.600 H13 L17.600 8.200 V19 H4.300 Z"/><path d="M12.800 3.800 V8.400 H17.400" stroke-width="1.100"/></svg><svg style="left:84.200px;margin-top:-7.600px" width="15" height="15" viewBox="0 0 15 15"><g fill="#6a6a6a"><circle cx="7.600" cy="4" r="3.600"/><path d="M0.500 14 L2.300 9.600 Q4 8.300 5.800 8.300 L7.600 10.200 L9.400 8.300 Q10.800 8.300 11.900 9.200 V14 Z"/><rect x="12.300" y="1.500" width="1.300" height="12.500" fill="#a5a5a5"/></g></svg></td></tr>
<tr class="s" style="height:34.9px"><td><span id="r6a0">Aparat Onay Performansı (Tofaş)</span></td><td><span id="r6b">ERM_O1_3_ARGE_AOP_TOFAS</span></td><td><span id="r6c">Gösterge</span></td><td><span id="r6d">yearly</span></td><td><span id="r6e">İzleme</span></td><td><span id="r6f">14.07.2017</span></td><td class="ic"><svg style="left:14.500px;margin-top:-9.300px" width="24" height="18" viewBox="0 0 24 18" fill="none" stroke="#6f6f6f"><path d="M13.500 2.600 H3 Q1 2.600 1 4.600 V15 Q1 17 3 17 H16 Q18 17 18 15 V11.500" stroke-width="1.500"/><path d="M9.300 13.200 L10.200 10 L18.700 1.500 L21 3.800 L12.500 12.300 Z M10.200 10 L12.500 12.300 M17.300 2.900 L19.600 5.200" stroke-width="1.200" stroke-linejoin="round" fill="#b9b9b9"/></svg><svg style="left:51.200px;margin-top:-9.700px" width="19" height="20" viewBox="0 0 19 20" fill="none" stroke="#6f6f6f" stroke-width="1.400"><path d="M3.700 16.500 H1.200 V1 H10.500 L11.800 2.300"/><path d="M4.300 3.600 H13 L17.600 8.200 V19 H4.300 Z"/><path d="M12.800 3.800 V8.400 H17.400" stroke-width="1.100"/></svg><svg style="left:84.200px;margin-top:-7.600px" width="15" height="15" viewBox="0 0 15 15"><g fill="#6a6a6a"><circle cx="7.600" cy="4" r="3.600"/><path d="M0.500 14 L2.300 9.600 Q4 8.300 5.800 8.300 L7.600 10.200 L9.400 8.300 Q10.800 8.300 11.900 9.200 V14 Z"/><rect x="12.300" y="1.500" width="1.300" height="12.500" fill="#a5a5a5"/></g></svg></td></tr>
<tr class="d g" style="height:59px"><td><span id="r7a0">MTBF Yayılım Alanı 10 03.08.0063 Punta</span><br><span id="r7a1">Robotu VSM</span></td><td><span id="r7b">ERM_Y3_6_WCM_YA10</span></td><td><span id="r7c">Gösterge</span></td><td><span id="r7d">Aylık</span></td><td><span id="r7e">Artan...</span></td><td><span id="r7f">14.07.2017</span></td><td class="ic"><svg style="left:14.500px;margin-top:-9.300px" width="24" height="18" viewBox="0 0 24 18" fill="none" stroke="#6f6f6f"><path d="M13.500 2.600 H3 Q1 2.600 1 4.600 V15 Q1 17 3 17 H16 Q18 17 18 15 V11.500" stroke-width="1.500"/><path d="M9.300 13.200 L10.200 10 L18.700 1.500 L21 3.800 L12.500 12.300 Z M10.200 10 L12.500 12.300 M17.300 2.900 L19.600 5.200" stroke-width="1.200" stroke-linejoin="round" fill="#b9b9b9"/></svg><svg style="left:51.200px;margin-top:-9.700px" width="19" height="20" viewBox="0 0 19 20" fill="none" stroke="#6f6f6f" stroke-width="1.400"><path d="M3.700 16.500 H1.200 V1 H10.500 L11.800 2.300"/><path d="M4.300 3.600 H13 L17.600 8.200 V19 H4.300 Z"/><path d="M12.800 3.800 V8.400 H17.400" stroke-width="1.100"/></svg><svg style="left:84.200px;margin-top:-7.600px" width="15" height="15" viewBox="0 0 15 15"><g fill="#6a6a6a"><circle cx="7.600" cy="4" r="3.600"/><path d="M0.500 14 L2.300 9.600 Q4 8.300 5.800 8.300 L7.600 10.200 L9.400 8.300 Q10.800 8.300 11.900 9.200 V14 Z"/><rect x="12.300" y="1.500" width="1.300" height="12.500" fill="#a5a5a5"/></g></svg></td></tr>
</table>
</div>
</div>

</body>
</html>
